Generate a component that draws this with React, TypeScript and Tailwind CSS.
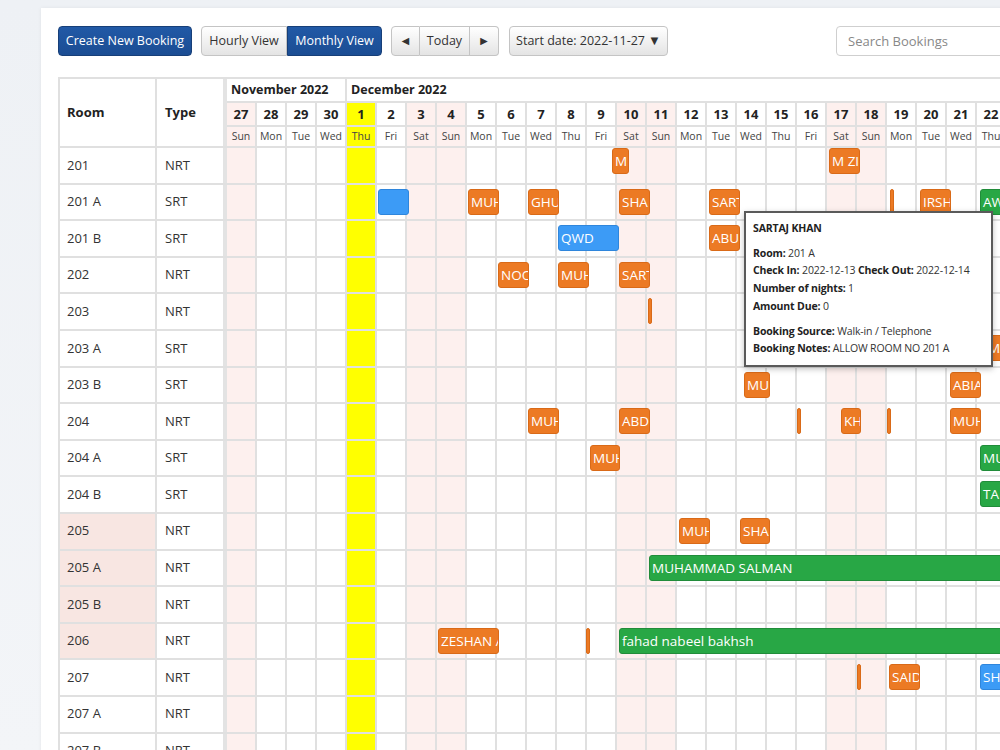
import React from "react";

type Booking = { row: number; x: number; w: number; c: "o" | "b" | "g"; t: string };

const DAYS: [number, string][] = [
  [27, "Sun"], [28, "Mon"], [29, "Tue"], [30, "Wed"], [1, "Thu"], [2, "Fri"], [3, "Sat"], [4, "Sun"],
  [5, "Mon"], [6, "Tue"], [7, "Wed"], [8, "Thu"], [9, "Fri"], [10, "Sat"], [11, "Sun"], [12, "Mon"],
  [13, "Tue"], [14, "Wed"], [15, "Thu"], [16, "Fri"], [17, "Sat"], [18, "Sun"], [19, "Mon"], [20, "Tue"],
  [21, "Wed"], [22, "Thu"],
];

const ROOMS: [string, string, boolean][] = [
  ["201", "NRT", false], ["201 A", "SRT", false], ["201 B", "SRT", false], ["202", "NRT", false],
  ["203", "NRT", false], ["203 A", "SRT", false], ["203 B", "SRT", false], ["204", "NRT", false],
  ["204 A", "SRT", false], ["204 B", "SRT", false], ["205", "NRT", true], ["205 A", "NRT", true],
  ["205 B", "NRT", true], ["206", "NRT", true], ["207", "NRT", false], ["207 A", "NRT", false],
  ["207 B", "NRT", false],
];

const BOOKINGS: Booking[] = [
  { row: 0, x: 612, w: 17, c: "o", t: "MI" },
  { row: 0, x: 829, w: 31, c: "o", t: "M ZI" },
  { row: 1, x: 378, w: 31, c: "b", t: "" },
  { row: 1, x: 468, w: 31, c: "o", t: "MUH" },
  { row: 1, x: 528, w: 31, c: "o", t: "GHU" },
  { row: 1, x: 619, w: 31, c: "o", t: "SHA" },
  { row: 1, x: 709, w: 31, c: "o", t: "SART" },
  { row: 1, x: 890, w: 3, c: "o", t: "" },
  { row: 1, x: 920, w: 31, c: "o", t: "IRSH" },
  { row: 1, x: 980, w: 40, c: "g", t: "AW" },
  { row: 2, x: 558, w: 61, c: "b", t: "QWD" },
  { row: 2, x: 709, w: 31, c: "o", t: "ABU" },
  { row: 3, x: 498, w: 31, c: "o", t: "NOOR" },
  { row: 3, x: 558, w: 31, c: "o", t: "MUH" },
  { row: 3, x: 619, w: 31, c: "o", t: "SART" },
  { row: 4, x: 648, w: 3, c: "o", t: "" },
  { row: 5, x: 985, w: 30, c: "o", t: "MA" },
  { row: 6, x: 744, w: 26, c: "o", t: "MU" },
  { row: 6, x: 950, w: 31, c: "o", t: "ABIA" },
  { row: 7, x: 528, w: 31, c: "o", t: "MUH" },
  { row: 7, x: 619, w: 31, c: "o", t: "ABD" },
  { row: 7, x: 797, w: 3, c: "o", t: "" },
  { row: 7, x: 841, w: 20, c: "o", t: "KH" },
  { row: 7, x: 887, w: 3, c: "o", t: "" },
  { row: 7, x: 950, w: 31, c: "o", t: "MUH" },
  { row: 8, x: 590, w: 30, c: "o", t: "MUH" },
  { row: 8, x: 980, w: 40, c: "g", t: "MU" },
  { row: 9, x: 980, w: 40, c: "g", t: "TA" },
  { row: 10, x: 679, w: 31, c: "o", t: "MUH" },
  { row: 10, x: 740, w: 30, c: "o", t: "SHA" },
  { row: 11, x: 649, w: 400, c: "g", t: "MUHAMMAD SALMAN" },
  { row: 13, x: 438, w: 61, c: "o", t: "ZESHAN ALI" },
  { row: 13, x: 586, w: 4, c: "o", t: "" },
  { row: 13, x: 619, w: 400, c: "g", t: "fahad nabeel bakhsh" },
  { row: 14, x: 857, w: 4, c: "o", t: "" },
  { row: 14, x: 889, w: 31, c: "o", t: "SAID" },
  { row: 14, x: 980, w: 40, c: "b", t: "SH" },
];

const COLORS = {
  o: "bg-[#ec7a24] border-[#d96a18]",
  b: "bg-[#3c9bf6] border-[#2f86dc]",
  g: "bg-[#28a745] border-[#218c3a]",
};

function isWeekend(d: string) {
  return d === "Sat" || d === "Sun";
}

function dayBg(i: number) {
  if (i === 4) return "bg-[#ffff00]";
  return isWeekend(DAYS[i][1]) ? "bg-[#fdf0ee]" : "bg-white";
}

const btn = "h-[30px] shrink-0 whitespace-nowrap border text-[12.5px] flex items-center justify-center";
const btnDefault = "border-[#c4c4c4] bg-gradient-to-b from-white to-[#e4e4e4] text-[#333]";
const btnPrimary = "border-[#173f78] bg-gradient-to-b from-[#2159a6] to-[#1b4d93] text-white";

export default function App() {
  return (
    <div className="relative w-[1000px] h-[750px] overflow-hidden bg-gradient-to-b from-[#eef1f5] to-[#f3f5f8] text-[#333]" style={{ fontFamily: '"Open Sans", "Noto Sans", sans-serif' }}>
      <div className="ml-[41px] mt-[8px] w-[1100px] h-[760px] bg-white shadow-[0_0_4px_rgba(0,0,0,0.06)] pl-[17px] pt-[18px]">
        {/* toolbar */}
        <div className="flex items-center">
          <button className={`${btn} ${btnPrimary} rounded-[4px] w-[134px]`}>Create New Booking</button>
          <div className="flex ml-[9px]">
            <button className={`${btn} ${btnDefault} rounded-l-[4px] w-[86px]`}>Hourly View</button>
            <button className={`${btn} ${btnPrimary} rounded-r-[4px] w-[95px]`}>Monthly View</button>
          </div>
          <div className="flex ml-[9px]">
            <button className={`${btn} ${btnDefault} rounded-l-[4px] w-[29px] text-[9px]`}>◄</button>
            <button className={`${btn} ${btnDefault} border-l-0 w-[50px]`}>Today</button>
            <button className={`${btn} ${btnDefault} border-l-0 rounded-r-[4px] w-[29px] text-[9px]`}>►</button>
          </div>
          <button className={`${btn} ${btnDefault} rounded-[4px] ml-[10px] w-[159px]`}>
            Start date: 2022-11-27 <span className="ml-[3px] text-[13px]">▼</span>
          </button>
          <input
            className="ml-[168px] h-[30px] w-[200px] shrink-0 border border-[#cfcfcf] rounded-[4px] pl-[11px] text-[13px] placeholder:text-[#888] outline-none"
            placeholder="Search Bookings"
          />
        </div>

        {/* grid */}
        <div className="mt-[21px] border-t-2 border-l-2 border-[#e0e0e0] w-[1050px]">
          {/* header */}
          <div className="flex border-b-2 border-[#e0e0e0]">
            <div className="w-[97px] shrink-0 border-r-2 border-[#e0e0e0] flex items-center pl-[7px] font-bold text-[13px] text-[#222]">Room</div>
            <div className="w-[70px] shrink-0 border-r-4 border-[#e3e3e3] flex items-center pl-[8px] font-bold text-[13px] text-[#222]">Type</div>
            <div className="flex flex-col">
              <div className="flex h-[24px] border-b-2 border-[#e0e0e0] font-bold text-[12.5px] text-[#222]">
                <div className="w-[120px] border-r-2 border-[#e0e0e0] pl-[4px] leading-[22px]">November 2022</div>
                <div className="w-[660px] pl-[4px] leading-[22px]">December 2022</div>
              </div>
              <div className="flex h-[24px] border-b-2 border-[#e0e0e0]">
                {DAYS.map(([n], i) => (
                  <div key={i} className={`w-[30px] shrink-0 border-r-2 border-[#e0e0e0] text-center font-bold text-[13px] leading-[22px] text-[#222] ${dayBg(i)}`}>{n}</div>
                ))}
              </div>
              <div className="flex h-[19px]">
                {DAYS.map(([, d], i) => (
                  <div key={i} className={`w-[30px] shrink-0 border-r-2 border-[#e0e0e0] text-center text-[10.5px] leading-[19px] text-[#444] ${dayBg(i)}`}>{d}</div>
                ))}
              </div>
            </div>
          </div>

          {/* body */}
          {ROOMS.map(([room, type, pink], r) => (
            <div key={room} className="flex h-[36.6px] border-b-2 border-[#e0e0e0] text-[13px]">
              <div className={`w-[97px] shrink-0 border-r-2 border-[#e0e0e0] flex items-center pl-[7px] ${pink ? "bg-[#f8e6e2]" : "bg-white"}`}>{room}</div>
              <div className="w-[70px] shrink-0 border-r-4 border-[#e3e3e3] flex items-center pl-[8px]">{type}</div>
              <div className="relative flex">
                {DAYS.map((_, i) => (
                  <div key={i} className={`w-[30px] shrink-0 border-r-2 border-[#e0e0e0] ${dayBg(i)}`} />
                ))}
                {BOOKINGS.filter((b) => b.row === r).map((b, k) => (
                  <div
                    key={k}
                    className={`absolute h-[26px] rounded-[3px] border overflow-hidden whitespace-nowrap text-white text-[13.5px] leading-[24px] pl-[2px] ${COLORS[b.c]}`}
                    style={{ left: b.x - 227, width: b.w, top: r === 0 ? 0 : 4 }}
                  >
                    {b.t}
                  </div>
                ))}
              </div>
            </div>
          ))}
        </div>
      </div>

      {/* tooltip */}
      <div className="absolute left-[744px] top-[211px] w-[249px] h-[156px] bg-white border-2 border-[#5a5a5a] shadow-[0_2px_6px_rgba(0,0,0,0.25)] px-[7px] pt-[7px] text-[10.5px] tracking-[-0.15px] whitespace-nowrap text-[#333] leading-[17.7px]">
        <div className="font-bold text-[#222]">SARTAJ KHAN</div>
        <div className="mt-[7px]"><b className="text-[#222]">Room:</b> 201 A</div>
        <div><b className="text-[#222]">Check In:</b> 2022-12-13 <b className="text-[#222]">Check Out:</b> 2022-12-14</div>
        <div><b className="text-[#222]">Number of nights:</b> 1</div>
        <div><b className="text-[#222]">Amount Due:</b> 0</div>
        <div className="mt-[7px]"><b className="text-[#222]">Booking Source:</b> Walk-in / Telephone</div>
        <div><b className="text-[#222]">Booking Notes:</b> ALLOW ROOM NO 201 A</div>
      </div>
    </div>
  );
}
